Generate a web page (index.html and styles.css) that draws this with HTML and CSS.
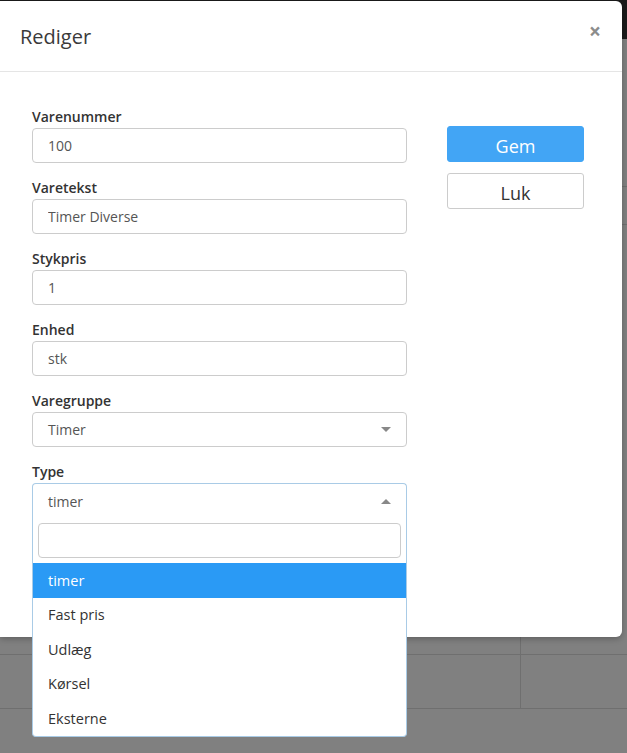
FILE: index.html
```html
<!DOCTYPE html>
<html lang="da">
<head>
  <meta charset="UTF-8">
  <meta name="viewport" content="width=device-width, initial-scale=1.0">
  <title>Rediger vare</title>
  <link rel="stylesheet" href="styles.css">
</head>
<body>
<div class="page">
  <div class="topbar"></div>
  <div class="bg-row r1"></div>
  <div class="bg-row r2"></div>
  <div class="bg-row r3"><div class="cell"></div></div>
  <div class="bg-row r4"><div class="cell"></div></div>
</div>

<div class="modal">
  <div class="modal-header">
    <h4 class="modal-title">Rediger</h4>
    <button type="button" class="close">&times;</button>
  </div>

  <div class="modal-body">
    <form class="fields">
      <div class="group">
        <label>Varenummer</label>
        <input class="control" type="text" value="100">
      </div>
      <div class="group">
        <label>Varetekst</label>
        <input class="control" type="text" value="Timer Diverse">
      </div>
      <div class="group">
        <label>Stykpris</label>
        <input class="control" type="text" value="1">
      </div>
      <div class="group">
        <label>Enhed</label>
        <input class="control" type="text" value="stk">
      </div>
      <div class="group">
        <label>Varegruppe</label>
        <div class="select">
          <span>Timer</span>
          <span class="arrow"></span>
        </div>
      </div>
      <div class="group">
        <label>Type</label>
        <div class="select open">
          <span>timer</span>
          <span class="arrow up"></span>
          <div class="dropdown">
            <div class="search-wrap">
              <input class="search" type="text">
            </div>
            <ul class="options">
              <li class="active">timer</li>
              <li>Fast pris</li>
              <li>Udlæg</li>
              <li>Kørsel</li>
              <li>Eksterne</li>
            </ul>
          </div>
        </div>
      </div>
    </form>

    <div class="actions">
      <button type="button" class="btn btn-primary">Gem</button>
      <button type="button" class="btn btn-default">Luk</button>
    </div>
  </div>
</div>
</body>
</html>
```

FILE: styles.css
```css
body {
  margin: 0;
  height: 753px;
  overflow: hidden;
  position: relative;
  background: #808080;
  font-family: "Open Sans", "Liberation Sans", sans-serif;
  color: #333;
}
.topbar {
  height: 39px;
  background: #1b1b1b;
}
.bg-row {
  display: flex;
  border-bottom: 1px solid #6f6f6f;
}
.r1 {
  height: 147px;
}
.r2 {
  height: 37px;
}
.r3 {
  height: 429px;
}
.r4 {
  height: 53px;
}
.cell {
  width: 520px;
  border-right: 1px solid #6f6f6f;
}
.modal {
  position: absolute;
  top: 1px;
  left: 0;
  width: 622px;
  background: #fff;
  border-radius: 0 6px 6px 0;
  box-shadow: 0 2px 6px rgba(0, 0, 0, 0.25);
}
.modal-header {
  height: 70px;
  display: flex;
  align-items: center;
  justify-content: space-between;
  padding: 0 21px 0 20px;
  border-bottom: 1px solid #e5e5e5;
}
.modal-title {
  margin: 0;
  font-size: 20px;
  font-weight: 400;
  color: #3a3a3a;
}
.close {
  align-self: flex-start;
  margin-top: 20px;
  padding: 0;
  border: 0;
  background: none;
  font-family: inherit;
  font-size: 21px;
  font-weight: 700;
  line-height: 1;
  color: #8c8c8c;
  cursor: pointer;
}
.modal-body {
  display: flex;
  gap: 40px;
  padding: 35px 0 104px 32px;
}
.fields {
  width: 375px;
  margin: 0;
}
.group {
  margin-bottom: 15px;
}
label {
  display: block;
  margin-bottom: 1px;
  font-size: 14px;
  font-weight: 600;
  line-height: 20px;
  color: #333;
}
.control {
  display: block;
  width: 100%;
  height: 35px;
  box-sizing: border-box;
  padding: 0 15px;
  border: 1px solid #ccc;
  border-radius: 4px;
  font-family: inherit;
  font-size: 14px;
  color: #555;
}
.select {
  position: relative;
  display: flex;
  align-items: center;
  height: 35px;
  box-sizing: border-box;
  padding: 0 15px;
  border: 1px solid #ccc;
  border-radius: 4px;
  font-size: 14px;
  color: #555;
}
.arrow {
  margin-left: auto;
  width: 0;
  height: 0;
  border-left: 5px solid transparent;
  border-right: 5px solid transparent;
  border-top: 5px solid #888;
}
.arrow.up {
  border-top: 0;
  border-bottom: 5px solid #888;
}
.select.open {
  border-color: #a9cbe6;
  border-bottom: 0;
  border-radius: 4px 4px 0 0;
}
.dropdown {
  position: absolute;
  top: 100%;
  left: -1px;
  right: -1px;
  z-index: 10;
  background: #fff;
  border: 1px solid #a9cbe6;
  border-top: 0;
  border-radius: 0 0 4px 4px;
}
.search-wrap {
  padding: 5px;
}
.search {
  display: block;
  width: 100%;
  height: 35px;
  box-sizing: border-box;
  border: 1px solid #ccc;
  border-radius: 4px;
  font-family: inherit;
}
.options {
  list-style: none;
  margin: 0;
  padding: 0;
}
.options li {
  padding: 6.5px 15px 6px;
  font-size: 14.5px;
  line-height: 22px;
  color: #333;
}
.options li.active {
  background: #2a9af5;
  color: #fff;
}
.actions {
  display: flex;
  flex-direction: column;
  gap: 11px;
  margin-top: 19px;
}
.btn {
  width: 137px;
  height: 36px;
  padding: 3px 0 0;
  border-radius: 3px;
  font-family: inherit;
  font-size: 18px;
  cursor: pointer;
}
.btn-primary {
  background: #42a5f5;
  border: 1px solid #42a5f5;
  color: #fff;
}
.btn-default {
  background: #fff;
  border: 1px solid #ccc;
  color: #333;
}
```
